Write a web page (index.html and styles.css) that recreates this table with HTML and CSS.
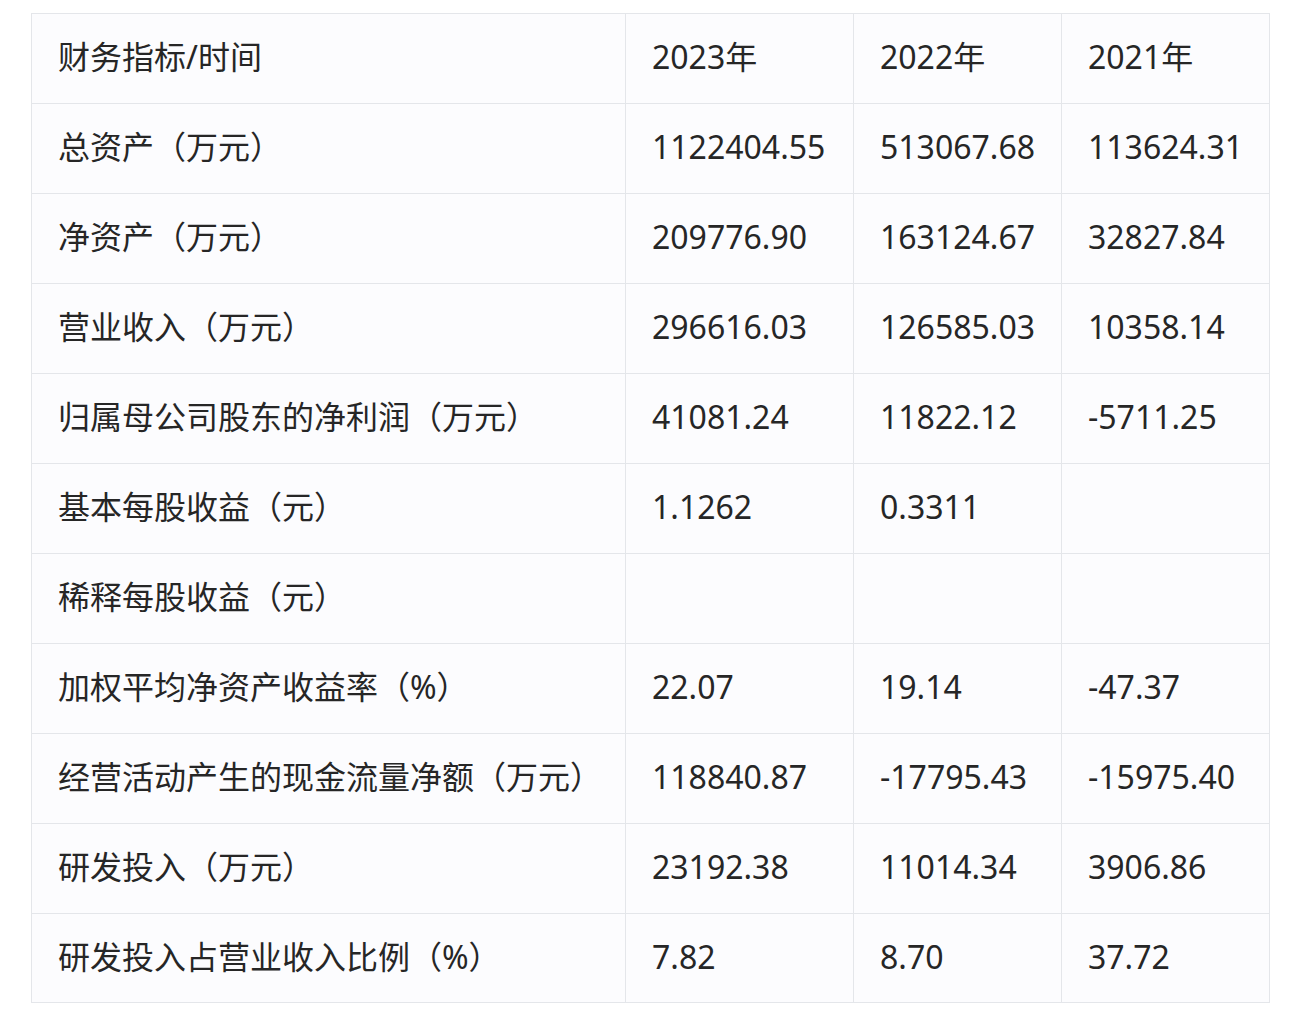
FILE: index.html
```html
<!DOCTYPE html>
<html lang="zh">
<head>
<meta charset="utf-8">
<link rel="stylesheet" href="styles.css">
</head>
<body>
<table class="fin">
<colgroup><col class="c1"><col class="c2"><col class="c3"><col class="c4"></colgroup>
<tr><td>财务指标/时间</td><td>2023年</td><td>2022年</td><td>2021年</td></tr>
<tr><td>总资产（万元）</td><td>1122404.55</td><td>513067.68</td><td>113624.31</td></tr>
<tr><td>净资产（万元）</td><td>209776.90</td><td>163124.67</td><td>32827.84</td></tr>
<tr><td>营业收入（万元）</td><td>296616.03</td><td>126585.03</td><td>10358.14</td></tr>
<tr><td>归属母公司股东的净利润（万元）</td><td>41081.24</td><td>11822.12</td><td>-5711.25</td></tr>
<tr><td>基本每股收益（元）</td><td>1.1262</td><td>0.3311</td><td></td></tr>
<tr><td>稀释每股收益（元）</td><td></td><td></td><td></td></tr>
<tr><td>加权平均净资产收益率（%）</td><td>22.07</td><td>19.14</td><td>-47.37</td></tr>
<tr><td>经营活动产生的现金流量净额（万元）</td><td>118840.87</td><td>-17795.43</td><td>-15975.40</td></tr>
<tr><td>研发投入（万元）</td><td>23192.38</td><td>11014.34</td><td>3906.86</td></tr>
<tr><td>研发投入占营业收入比例（%）</td><td>7.82</td><td>8.70</td><td>37.72</td></tr>
</table>
</body>
</html>
```
FILE: styles.css
```css
html, body {
  margin: 0;
  background: #ffffff;
}
body {
  padding: 13px 0 0 31px;
  font-family: "Noto Sans", "Noto Sans CJK SC", sans-serif;
  color: #262626;
}
.fin {
  border-collapse: collapse;
  table-layout: fixed;
  width: 1238px;
  background: #fcfcfe;
}
.c1 { width: 594px; }
.c2 { width: 228px; }
.c3 { width: 208px; }
.c4 { width: 208px; }
.fin td {
  border: 1px solid #e4e6ea;
  height: 90px;
  padding: 0 0 3px 26px;
  font-size: 32px;
  line-height: 1;
  vertical-align: middle;
  white-space: nowrap;
  box-sizing: border-box;
}
.fin tr:last-child td {
  height: 89px;
}
```
